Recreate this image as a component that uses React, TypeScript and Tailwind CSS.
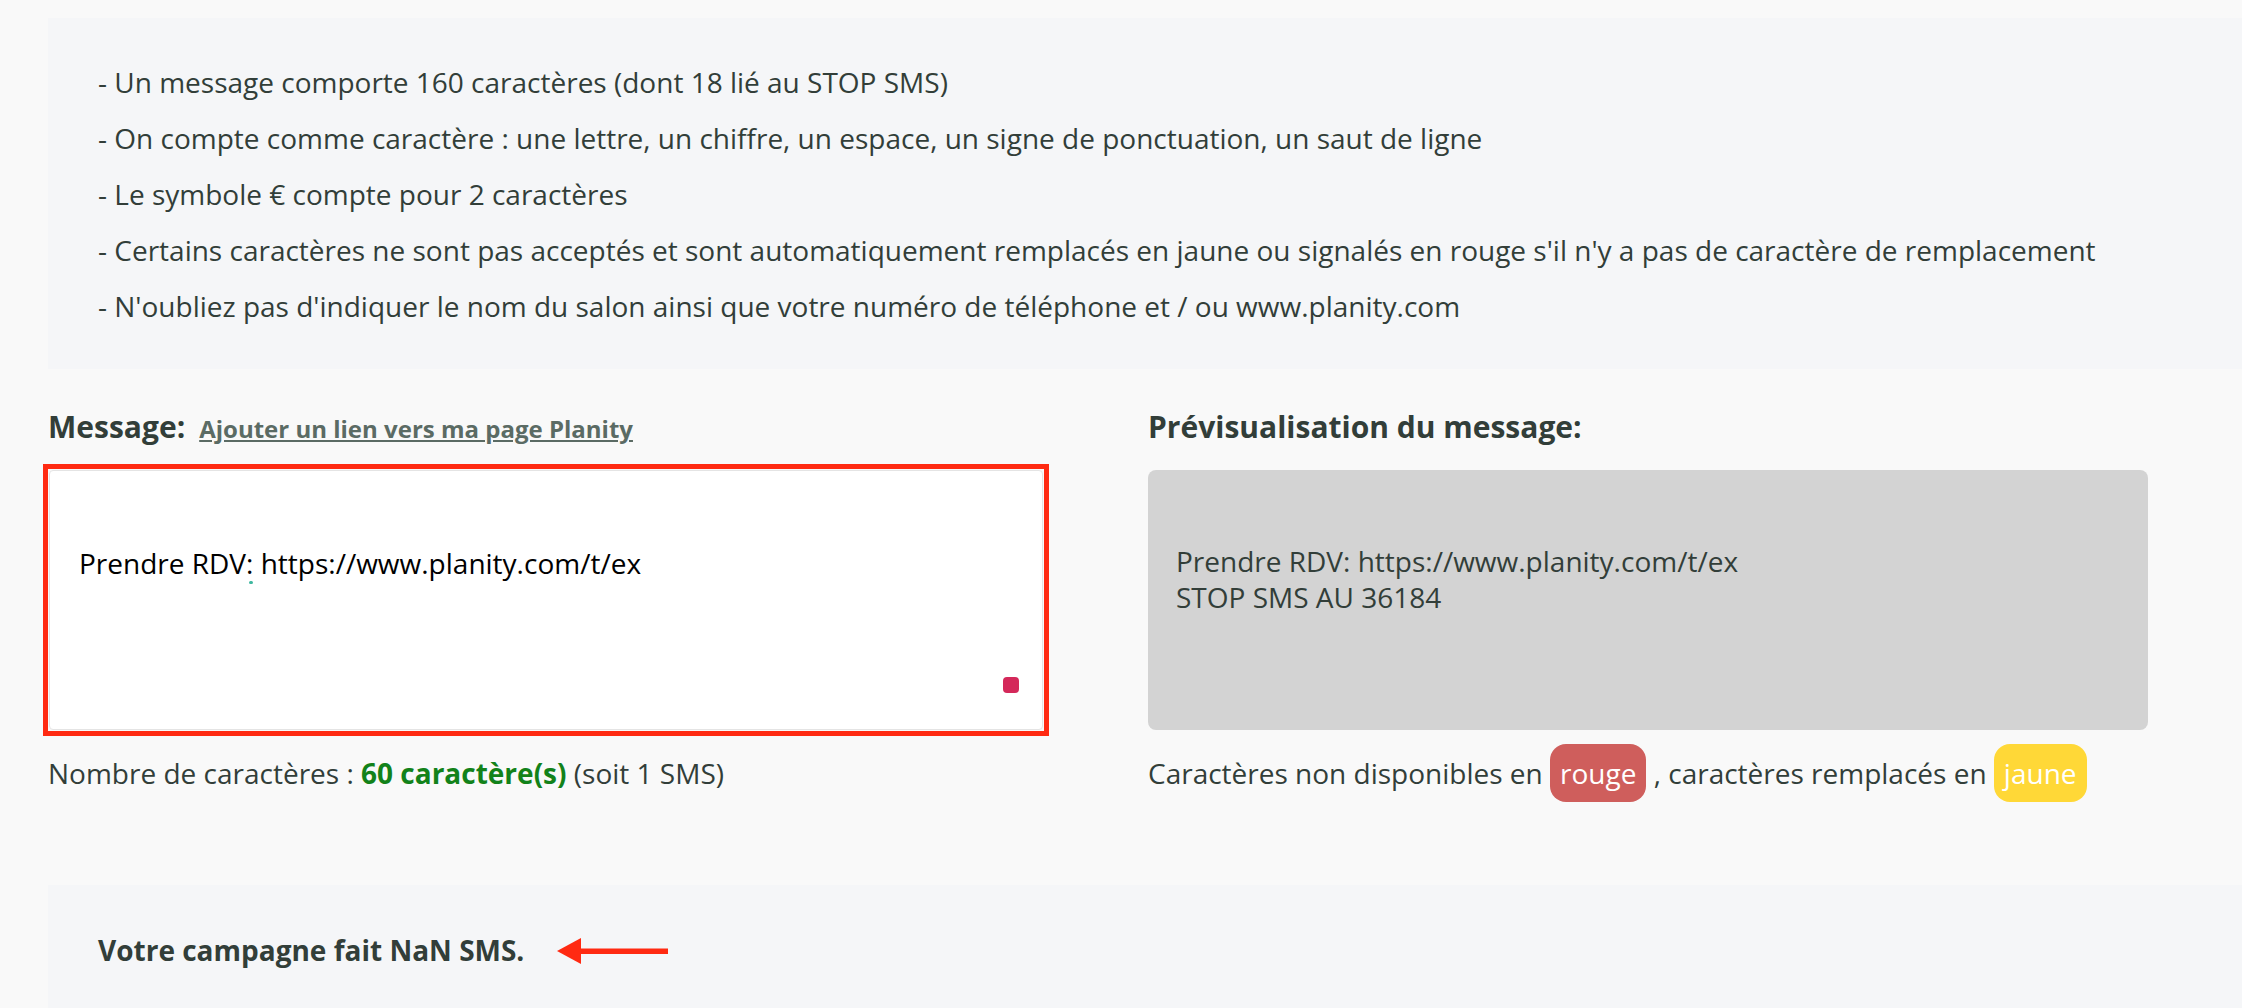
import React from "react";

/* ─── Rules shown above the editor ─── */
const rules = [
  "- Un message comporte 160 caractères (dont 18 lié au STOP SMS)",
  "- On compte comme caractère : une lettre, un chiffre, un espace, un signe de ponctuation, un saut de ligne",
  "- Le symbole € compte pour 2 caractères",
  "- Certains caractères ne sont pas acceptés et sont automatiquement remplacés en jaune ou signalés en rouge s'il n'y a pas de caractère de remplacement",
  "- N'oubliez pas d'indiquer le nom du salon ainsi que votre numéro de téléphone et / ou www.planity.com",
];

/* ─── Red annotation arrow ─── */
function ArrowLeft() {
  return (
    <svg width="112" height="26" viewBox="0 0 112 26" aria-hidden="true">
      <path d="M0 13 L24 0 L24 26 Z" fill="#ff2a12" />
      <rect x="22" y="10.5" width="89" height="5.5" fill="#ff2a12" />
    </svg>
  );
}

export default function App() {
  return (
    <div className="min-h-screen bg-[#f9f9f9] pl-12 pt-[18px] font-['Open_Sans',sans-serif] text-[28px] text-[#323e39]">
      {/* Info panel */}
      <div className="flex flex-col gap-4 bg-[#f5f6f8] pl-[50px] pt-[44px] pb-[43px]">
        {rules.map((r) => (
          <p key={r} className="leading-[40px]">
            {r}
          </p>
        ))}
      </div>

      {/* Editor + preview */}
      <div className="mt-[38px] flex">
        {/* Message */}
        <div className="w-[1100px] shrink-0">
          <div className="flex items-baseline gap-[14px] leading-[40px]">
            <span className="text-[30px] font-bold">Message:</span>
            <a href="#" className="text-[24px] font-bold text-[#5b6b64] underline">
              Ajouter un lien vers ma page Planity
            </a>
          </div>

          <div className="mt-[15px] -ml-[5px] w-[1006px] border-[5px] border-[#ff2a12] p-px">
            <div className="relative h-[260px] rounded-[4px] border border-[#e4e4e4] bg-white pl-[29px] pt-[73px] leading-[38px] text-black">
              Prendre RDV: https://www.planity.com/t/ex
              <span className="absolute left-[199px] top-[110px] h-[3px] w-[4px] rounded-full bg-[#3fb8a0]" />
              <span className="absolute right-[23px] bottom-[36px] h-4 w-4 rounded-[4px] bg-[#d4285a]" />
            </div>
          </div>

          <p className="mt-[8px] leading-[58px]">
            Nombre de caractères : <span className="font-bold text-[#12821a]">60 caractère(s)</span> (soit 1 SMS)
          </p>
        </div>

        {/* Preview */}
        <div className="flex-1">
          <h3 className="text-[30px] font-bold leading-[40px]">Prévisualisation du message:</h3>
          <div className="mt-[23px] h-[260px] w-[1000px] rounded-[8px] bg-[#d3d3d3] pl-[28px] pt-[73px] leading-[36px]">
            <p>Prendre RDV: https://www.planity.com/t/ex</p>
            <p>STOP SMS AU 36184</p>
          </div>
          <div className="mt-[14px] flex items-center whitespace-pre leading-[58px]">
            <span>Caractères non disponibles en </span>
            <span className="rounded-[16px] bg-[#cf5e5c] px-[10px] text-white">rouge</span>
            <span> , caractères remplacés en </span>
            <span className="rounded-[16px] bg-[#ffd837] px-[10px] text-white">jaune</span>
          </div>
        </div>
      </div>

      {/* Campaign summary */}
      <div className="mt-[83px] flex h-[140px] items-start gap-[33px] bg-[#f5f6f8] pl-[50px] pt-[45px]">
        <span className="font-bold leading-[40px]">Votre campagne fait NaN SMS.</span>
        <span className="pt-[8px]">
          <ArrowLeft />
        </span>
      </div>
    </div>
  );
}
